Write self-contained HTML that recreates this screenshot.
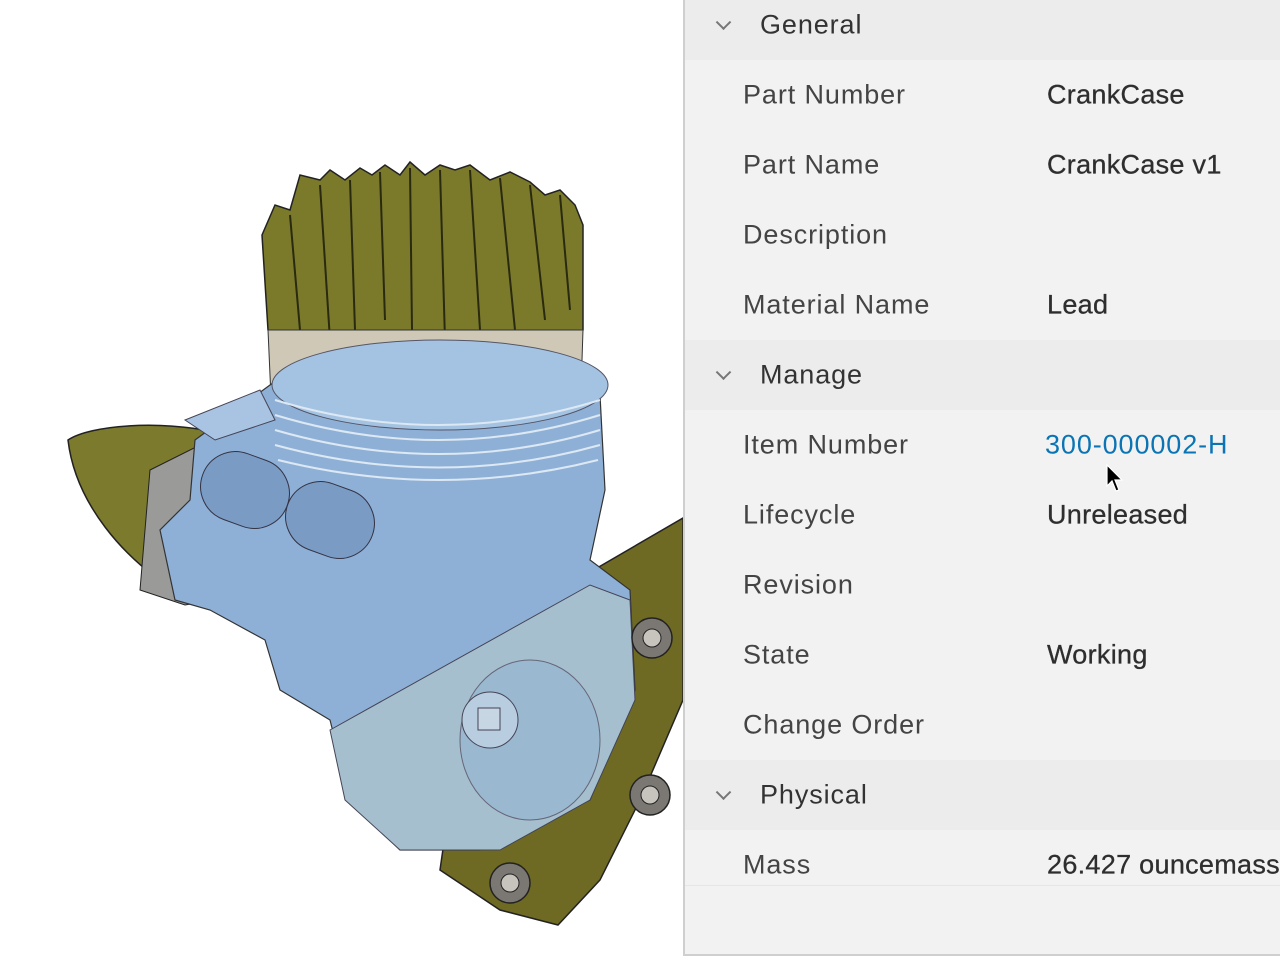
<!DOCTYPE html>
<html><head><meta charset="utf-8"><style>
html,body{margin:0;padding:0;width:1280px;height:960px;overflow:hidden;background:#fff;font-family:"Liberation Sans",sans-serif}
#panel{position:absolute;left:683px;top:0;width:597px;height:954px;background:#f2f2f2;border-left:2px solid #cfcfcf;border-bottom:2px solid #cfcfcf;box-sizing:content-box}
.row{position:absolute;left:0;width:597px;height:70px;font-size:27px;letter-spacing:0.9px}
.hdr{background:#ececec;color:#333}
.hdr .t{position:absolute;left:75px;top:50%;transform:translateY(-50%)}
.hdr .c{position:absolute;left:33px;top:50%;width:9px;height:9px;border-right:2px solid #777;border-bottom:2px solid #777;transform:translateY(-75%) rotate(45deg)}
.it .l{position:absolute;left:58px;top:50%;transform:translateY(-50%);color:#444}
.it .v{position:absolute;left:362px;top:50%;transform:translateY(-50%);color:#2e2e2e;white-space:nowrap;letter-spacing:0.3px;-webkit-text-stroke:0.3px #2e2e2e}
</style></head><body>
<svg width="683" height="960" style="position:absolute;left:0;top:0" viewBox="0 0 683 960">
 <polygon points="585,575 683,518 683,700 640,800 600,880 558,925 500,910 440,870 450,800" fill="#6e6a24" stroke="#222" stroke-width="1.5"/>
 <path d="M215,432 C160,420 90,425 68,440 C75,500 120,560 190,600 L200,480 Z" fill="#7c7a2c" stroke="#222" stroke-width="1.5"/>
 <polygon points="150,470 200,445 215,600 185,605 140,590" fill="#9a9a98" stroke="#222"/>
 <path d="M262,235 L275,205 L290,210 L300,175 L320,180 L330,170 L345,180 L360,168 L372,175 L385,165 L400,175 L410,162 L425,175 L440,165 L455,170 L470,165 L490,180 L510,172 L530,182 L545,195 L560,190 L575,205 L583,225 L583,330 L560,350 L440,360 L300,350 L268,330 Z" fill="#7b7a2a" stroke="#222" stroke-width="1.5"/>
 <g stroke="#2a2a10" stroke-width="2" fill="none">
  <path d="M290,215 L300,330"/><path d="M320,185 L330,340"/><path d="M350,180 L355,330"/><path d="M380,172 L385,320"/><path d="M410,168 L412,330"/><path d="M440,170 L445,340"/><path d="M470,170 L480,330"/><path d="M500,178 L515,330"/><path d="M530,185 L545,320"/><path d="M560,195 L570,310"/>
 </g>
 <path d="M268,330 L583,330 L580,420 L272,420 Z" fill="#cfc8b6" stroke="#333"/>
 <path d="M195,440 L270,385 C330,340 550,335 600,395 L605,490 L590,560 L630,590 L635,690 L590,800 L480,850 L400,850 L350,800 L330,720 L280,690 L265,640 L210,610 L175,600 L160,530 L190,500 Z" fill="#8fb0d6" stroke="#333" stroke-width="1.2"/>
 <ellipse cx="440" cy="385" rx="168" ry="45" fill="#a4c3e2" stroke="#556" stroke-width="1"/>
 <g stroke="#dce8f3" stroke-width="2" fill="none">
  <path d="M275,400 Q440,450 600,400"/><path d="M275,415 Q440,465 600,415"/><path d="M275,430 Q440,478 600,430"/><path d="M275,445 Q440,490 600,445"/><path d="M278,460 Q440,500 598,460"/>
 </g>
 <path d="M185,420 L260,390 L275,420 L215,440 Z" fill="#a9c4e2" stroke="#445"/>
 <rect x="200" y="455" width="90" height="70" rx="35" fill="#7a9bc4" stroke="#334" transform="rotate(20 245 490)"/>
 <rect x="285" y="485" width="90" height="70" rx="35" fill="#7a9bc4" stroke="#334" transform="rotate(20 330 520)"/>
 <path d="M330,730 L590,585 L630,600 L635,700 L590,800 L500,850 L400,850 L345,800 Z" fill="#a5bfcf" stroke="#445" stroke-width="1"/>
 <ellipse cx="530" cy="740" rx="70" ry="80" fill="#9ab8cf" stroke="#667"/>
 <circle cx="490" cy="720" r="28" fill="#b9cde0" stroke="#445"/>
 <rect x="478" y="708" width="22" height="22" fill="#c7d6e3" stroke="#445"/>
 <g fill="#7b7874" stroke="#222" stroke-width="1.5">
  <circle cx="652" cy="638" r="20"/><circle cx="650" cy="795" r="20"/><circle cx="510" cy="883" r="20"/>
 </g>
 <g fill="#c7c3bd" stroke="#222"><circle cx="652" cy="638" r="9"/><circle cx="650" cy="795" r="9"/><circle cx="510" cy="883" r="9"/></g>
</svg>
<div id="panel">
 <div class="row hdr" style="top:-10px;height:70px"><span class="c"></span><span class="t">General</span></div>
 <div class="row it" style="top:60px"><span class="l">Part Number</span><span class="v">CrankCase</span></div>
 <div class="row it" style="top:130px"><span class="l">Part Name</span><span class="v">CrankCase v1</span></div>
 <div class="row it" style="top:200px"><span class="l">Description</span><span class="v"></span></div>
 <div class="row it" style="top:270px"><span class="l">Material Name</span><span class="v">Lead</span></div>
 <div class="row hdr" style="top:340px"><span class="c"></span><span class="t">Manage</span></div>
 <div class="row it" style="top:410px"><span class="l">Item Number</span><span class="v" style="color:#0a74b4;-webkit-text-stroke:0;left:360px;letter-spacing:0.9px">300-000002-H</span></div>
 <div class="row it" style="top:480px"><span class="l">Lifecycle</span><span class="v">Unreleased</span></div>
 <div class="row it" style="top:550px"><span class="l">Revision</span><span class="v"></span></div>
 <div class="row it" style="top:620px"><span class="l">State</span><span class="v">Working</span></div>
 <div class="row it" style="top:690px"><span class="l">Change Order</span><span class="v"></span></div>
 <div class="row hdr" style="top:760px"><span class="c"></span><span class="t">Physical</span></div>
 <div class="row it" style="top:830px;height:55px;border-bottom:1px solid #e6e6e6"><span class="l" style="top:35px">Mass</span><span class="v" style="top:35px">26.427 ouncemass</span></div>
</div>
<svg width="20" height="32" style="position:absolute;left:1106px;top:464px" viewBox="0 0 20 32"><path d="M1,1 L1,22 L6,17 L10,27 L13,26 L9,16 L16,16 Z" fill="#000" stroke="#fff" stroke-width="1.2"/></svg>
</body></html>
